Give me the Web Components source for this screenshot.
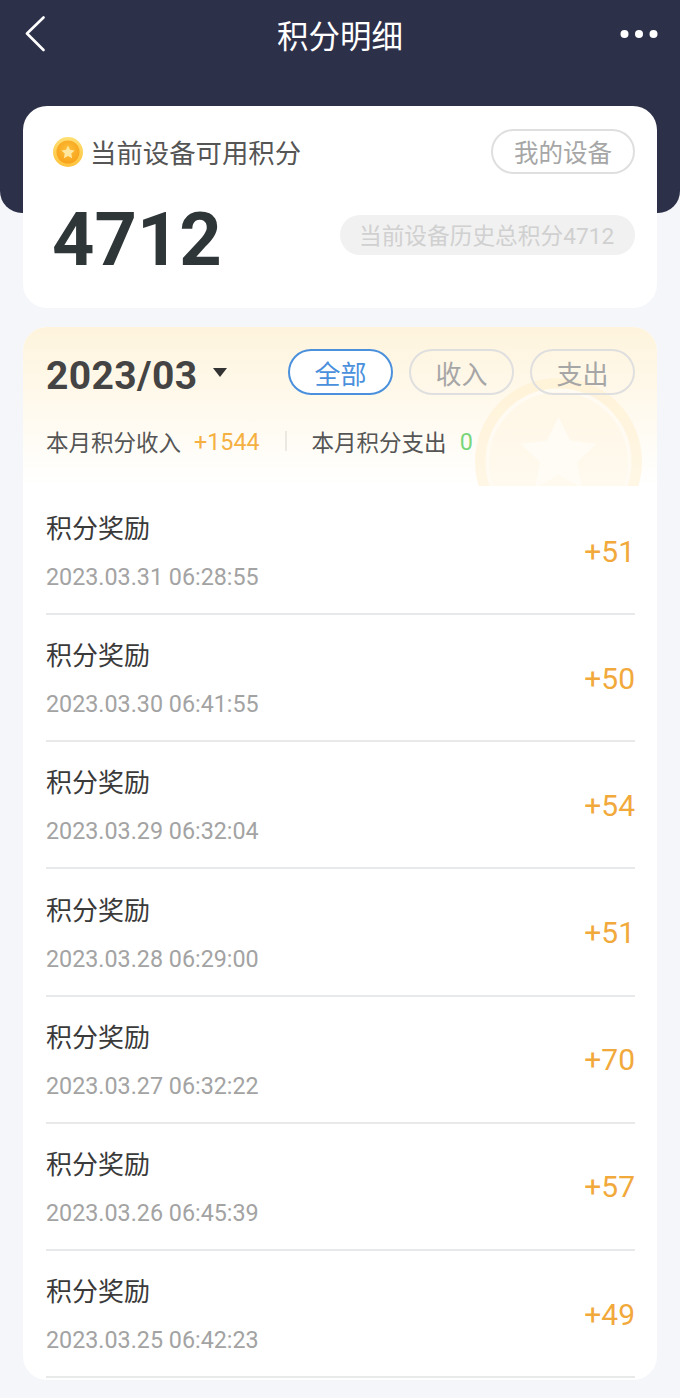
<!DOCTYPE html>
<html lang="zh">
<head>
<meta charset="utf-8">
<title>积分明细</title>
<style>
  html, body { margin: 0; padding: 0; background: #f4f6fa; }
  body {
    width: 680px;
    height: 1398px;
    overflow: hidden;
    font-family: Roboto, "Noto Sans CJK SC", sans-serif;
  }
  main {
    display: flex;
    flex-direction: column;
    gap: 19px;
    padding: 0 23px;
    margin-top: -107px;
  }
</style>
</head>
<body>
<app-header>积分明细</app-header>
<main>
  <balance-card total="4712" history="当前设备历史总积分4712"></balance-card>
  <month-panel month="2023/03" income="+1544" expense="0">
    <record-row time="2023.03.31 06:28:55" amount="+51"></record-row>
    <record-row time="2023.03.30 06:41:55" amount="+50"></record-row>
    <record-row time="2023.03.29 06:32:04" amount="+54"></record-row>
    <record-row time="2023.03.28 06:29:00" amount="+51"></record-row>
    <record-row time="2023.03.27 06:32:22" amount="+70"></record-row>
    <record-row time="2023.03.26 06:45:39" amount="+57"></record-row>
    <record-row time="2023.03.25 06:42:23" amount="+49"></record-row>
  </month-panel>
</main>

<script>
class AppHeader extends HTMLElement {
  constructor() {
    super();
    this.attachShadow({ mode: "open" });
    this.shadowRoot.innerHTML = `
      <style>
        :host {
          display: block;
          height: 213px;
          background: #2d3049;
          border-radius: 0 0 22px 22px;
          color: #fff;
        }
        .bar {
          display: flex;
          align-items: center;
          justify-content: space-between;
          height: 68px;
          padding: 0 22px 0 25px;
        }
        .title {
          font-size: 31.5px;
          line-height: 76px;
          position: absolute;
          top: 0;
          left: 0;
          width: 680px;
          text-align: center;
        }
        svg { display: block; position: relative; }
      </style>
      <div class="bar">
        <span class="title"><slot></slot></span>
        <svg width="20" height="36" viewBox="0 0 20 36" fill="none">
          <path d="M18.5 1.5 2 17.5 18.5 34" stroke="#fff" stroke-width="2.6" stroke-linecap="round" stroke-linejoin="round"/>
        </svg>
        <svg width="38" height="10" viewBox="0 0 38 10" fill="#fff">
          <circle cx="4.5" cy="5" r="4"/><circle cx="19" cy="5" r="4"/><circle cx="33.5" cy="5" r="4"/>
        </svg>
      </div>
    `;
  }
}

class PillButton extends HTMLElement {
  constructor() {
    super();
    this.attachShadow({ mode: "open" });
    this.shadowRoot.innerHTML = `
      <style>
        :host {
          display: inline-flex;
          align-items: center;
          justify-content: center;
          box-sizing: border-box;
          width: var(--pill-width, 105px);
          height: var(--pill-height, 46px);
          border: 2px solid #dfdfdf;
          border-radius: 24px;
          color: #a6a6a6;
          font-size: var(--pill-font, 26px);
        }
        :host([active]) {
          border-color: #4a90dc;
          color: #4a90dc;
          background: #fff;
        }
      </style>
      <slot></slot>
    `;
  }
}

class BalanceCard extends HTMLElement {
  constructor() {
    super();
    this.attachShadow({ mode: "open" });
  }

  connectedCallback() {
    const total = this.getAttribute("total") || "0";
    const history = this.getAttribute("history") || "";
    this.shadowRoot.innerHTML = `
      <style>
        :host {
          display: block;
          box-sizing: border-box;
          height: 202px;
          background: #fff;
          border-radius: 24px;
          padding: 23px 22px 0 30px;
          color: #333;
        }
        .top, .bottom {
          display: flex;
          align-items: center;
          justify-content: space-between;
        }
        .label {
          display: flex;
          align-items: center;
          gap: 7px;
          font-size: 26.4px;
          color: #555;
        }
        .bottom { margin-top: 20px; }
        .total {
          font-size: 74px;
          font-weight: 700;
          line-height: 92px;
          color: #2f3637;
          margin-left: -1px;
        }
        .history {
          display: flex;
          align-items: center;
          box-sizing: border-box;
          width: 295px;
          height: 40px;
          margin-top: -11px;
          padding-left: 19px;
          border-radius: 20px;
          background: #f1f1f1;
          color: #d0d0d0;
          font-size: 22.7px;
          white-space: nowrap;
        }
        pill-button { --pill-width: 144px; --pill-height: 45px; --pill-font: 24.5px; }
      </style>
      <div class="top">
        <span class="label">
          <svg width="30" height="32" viewBox="0 0 30 32">
            <defs>
              <linearGradient id="rim" x1="0" y1="0" x2="0" y2="1">
                <stop offset="0" stop-color="#ffdf74"/>
                <stop offset="1" stop-color="#ffc23c"/>
              </linearGradient>
              <radialGradient id="face" cx="0.5" cy="0.4" r="0.7">
                <stop offset="0" stop-color="#fdc03a"/>
                <stop offset="1" stop-color="#f79c14"/>
              </radialGradient>
            </defs>
            <circle cx="15" cy="16" r="15" fill="url(#rim)"/>
            <circle cx="15" cy="16" r="11.500" fill="url(#face)"/>
            <path d="M15 9.500l2 4.200 4.600.7-3.300 3.200.8 4.600-4.100-2.200-4.100 2.200.8-4.600-3.300-3.200 4.600-.7z" fill="#ffe7a0"/>
          </svg>
          当前设备可用积分
        </span>
        <pill-button>我的设备</pill-button>
      </div>
      <div class="bottom">
        <span class="total">${total}</span>
        <span class="history">${history}</span>
      </div>
    `;
  }
}

class MonthPanel extends HTMLElement {
  constructor() {
    super();
    this.attachShadow({ mode: "open" });
  }

  connectedCallback() {
    const month = this.getAttribute("month") || "";
    const income = this.getAttribute("income") || "";
    const expense = this.getAttribute("expense") || "";
    this.shadowRoot.innerHTML = `
      <style>
        :host {
          display: block;
          position: relative;
          box-sizing: border-box;
          height: 1053px;
          overflow: hidden;
          border-radius: 24px;
          background: #fff;
        }
        .head {
          position: relative;
          box-sizing: border-box;
          height: 159px;
          padding: 22px 22px 0 23px;
          overflow: hidden;
          background: linear-gradient(#fef4dd 0%, #fff9ec 45%, #ffffff 100%);
        }
        .watermark { position: absolute; left: 452px; top: 51px; }
        .row1, .row2, .tabs { position: relative; display: flex; align-items: center; }
        .row1 { justify-content: space-between; height: 46px; }
        .month {
          display: flex;
          align-items: center;
          gap: 15px;
          font-size: 39px;
          font-weight: 700;
          color: #444;
          letter-spacing: 0.4px;
          margin-top: 8px;
        }
        .caret {
          width: 0;
          height: 0;
          margin-top: -8px;
          border-left: 7.500px solid transparent;
          border-right: 7.500px solid transparent;
          border-top: 9px solid #333;
        }
        .tabs { gap: 16px; }
        .row2 {
          margin-top: 30px;
          height: 32px;
          font-size: 22.5px;
          color: #555;
        }
        .up, .down { font-size: 23.3px; margin-left: 13px; padding-top: 2px; }
        .up { color: #f5b042; }
        .down { color: #79d67a; }
        .sep { width: 2px; height: 20px; background: #ece9e3; margin: 0 25px; }
        .list { padding: 2px 22px 0 23px; }
      </style>
      <div class="head">
        <svg class="watermark" width="180" height="120" viewBox="0 0 180 120">
          <defs>
            <linearGradient id="wm" x1="0" y1="0" x2="0" y2="1">
              <stop offset="0" stop-color="#fff3d8"/>
              <stop offset="1" stop-color="#fff8ec"/>
            </linearGradient>
            <linearGradient id="wm-in" x1="0" y1="0" x2="0" y2="1">
              <stop offset="0" stop-color="#fff7e6"/>
              <stop offset="1" stop-color="#fffbf3"/>
            </linearGradient>
          </defs>
          <circle cx="83.500" cy="83.500" r="83.500" fill="url(#wm)"/>
          <circle cx="83.500" cy="83.500" r="71" fill="url(#wm-in)" stroke="#fffaf2" stroke-width="4"/>
          <path d="M83.500 39l11.500 23.500 26 3.500-19 18 5 26-23.500-13-23.500 13 5-26-19-18 26-3.500z" fill="#fffcf6"/>
        </svg>
        <div class="row1">
          <span class="month">${month}<i class="caret"></i></span>
          <span class="tabs">
            <pill-button active>全部</pill-button>
            <pill-button>收入</pill-button>
            <pill-button>支出</pill-button>
          </span>
        </div>
        <div class="row2">
          <span>本月积分收入</span><span class="up">${income}</span>
          <i class="sep"></i>
          <span>本月积分支出</span><span class="down">${expense}</span>
        </div>
      </div>
      <div class="list"><slot></slot></div>
    `;
  }
}

class RecordRow extends HTMLElement {
  constructor() {
    super();
    this.attachShadow({ mode: "open" });
  }

  connectedCallback() {
    const time = this.getAttribute("time") || "";
    const amount = this.getAttribute("amount") || "";
    this.shadowRoot.innerHTML = `
      <style>
        :host {
          display: flex;
          align-items: center;
          justify-content: space-between;
          box-sizing: border-box;
          height: 127.170px;
          padding-top: 4px;
          border-bottom: 2px solid #e8e9eb;
        }
        .name { font-size: 26px; line-height: 36px; color: #3a3a3a; margin-top: -1px; }
        .time { font-size: 23.300px; line-height: 32px; margin-top: 14px; color: #a3a3a3; }
        .amount { font-size: 30px; color: #f2a93b; margin-top: -3px; }
      </style>
      <div>
        <div class="name">积分奖励</div>
        <div class="time">${time}</div>
      </div>
      <div class="amount">${amount}</div>
    `;
  }
}

customElements.define("app-header", AppHeader);
customElements.define("pill-button", PillButton);
customElements.define("balance-card", BalanceCard);
customElements.define("month-panel", MonthPanel);
customElements.define("record-row", RecordRow);
</script>
</body>
</html>
